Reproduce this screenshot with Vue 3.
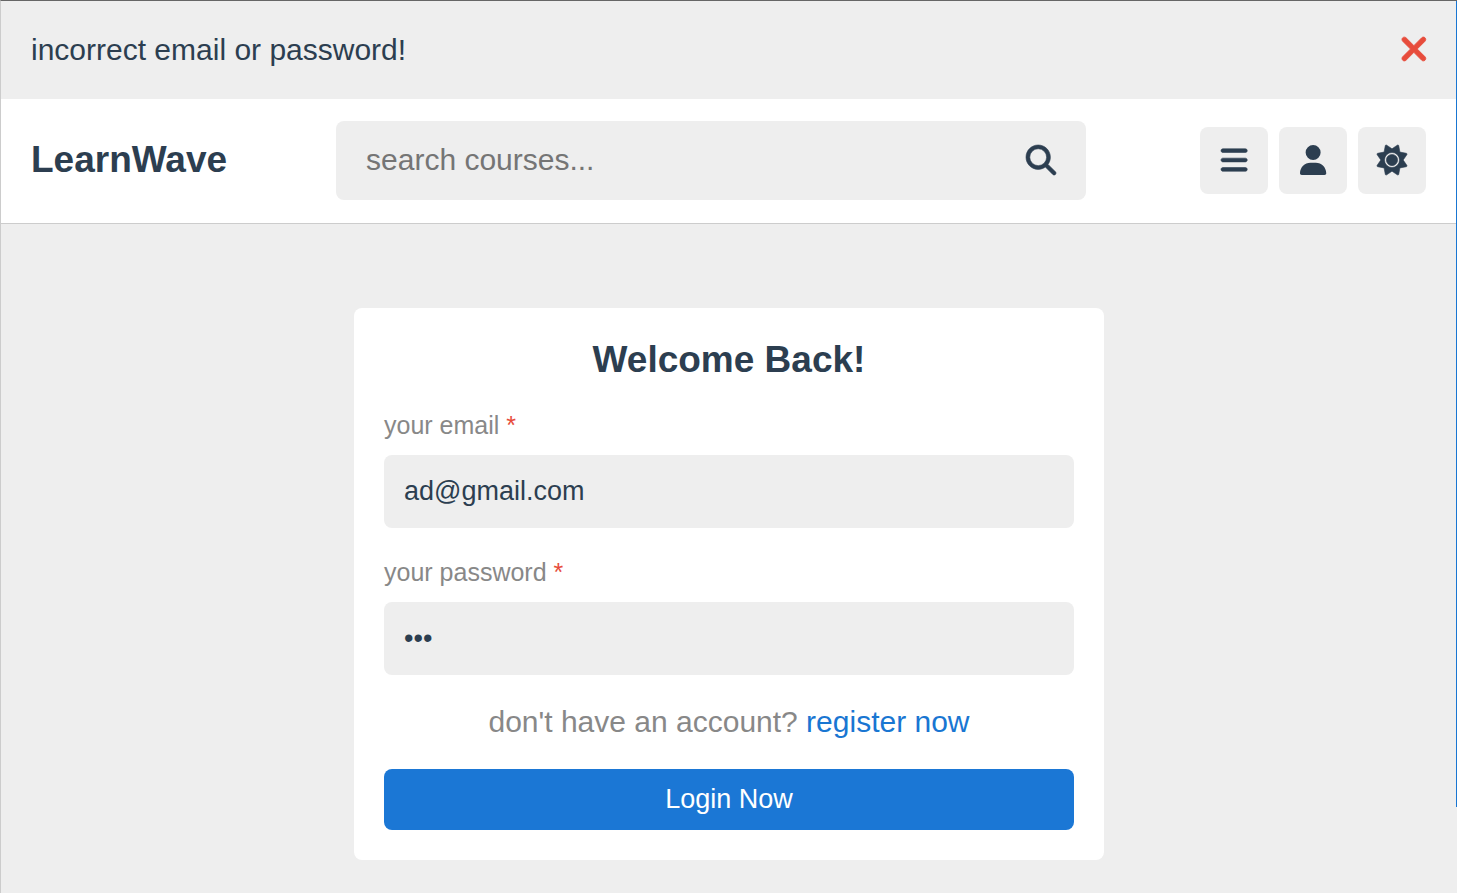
<script setup>
import { ref } from 'vue'

const showMessage = ref(true)
const search = ref('')
const email = ref('ad@gmail.com')
const password = ref('abc')
</script>

<template>
  <div class="page">
    <div v-if="showMessage" class="message" role="alert">
      <span>incorrect email or password!</span>
      <button type="button" class="close" aria-label="Dismiss" @click="showMessage = false">
        <svg viewBox="0 0 320 512" aria-hidden="true"><path d="M310.6 150.6c12.5-12.5 12.5-32.8 0-45.3s-32.8-12.5-45.3 0L160 210.7 54.6 105.4c-12.5-12.5-32.8-12.5-45.3 0s-12.5 32.8 0 45.3L114.7 256 9.4 361.4c-12.5 12.5-12.5 32.8 0 45.3s32.8 12.5 45.3 0L160 301.3 265.4 406.6c12.5 12.5 32.8 12.5 45.3 0s12.5-32.8 0-45.3L205.3 256 310.6 150.6z" /></svg>
      </button>
    </div>

    <header class="header">
      <a href="#" class="logo">LearnWave</a>
      <form class="search" role="search" @submit.prevent>
        <input v-model="search" type="text" placeholder="search courses..." aria-label="search courses" />
        <button type="submit" aria-label="Search">
          <svg class="bold" viewBox="0 0 512 512" aria-hidden="true"><path d="M416 208c0 45.9-14.9 88.3-40 122.7L502.6 457.4c12.5 12.5 12.5 32.8 0 45.3s-32.8 12.5-45.3 0L330.7 376c-34.4 25.2-76.8 40-122.7 40C93.1 416 0 322.9 0 208S93.1 0 208 0S416 93.1 416 208zM208 352a144 144 0 1 0 0-288 144 144 0 1 0 0 288z" /></svg>
        </button>
      </form>
      <nav class="icons">
        <button type="button" aria-label="Menu">
          <svg class="bold" viewBox="0 0 448 512" aria-hidden="true"><path d="M0 96C0 78.3 14.3 64 32 64H416c17.7 0 32 14.3 32 32s-14.3 32-32 32H32C14.3 128 0 113.7 0 96zM0 256c0-17.7 14.3-32 32-32H416c17.7 0 32 14.3 32 32s-14.3 32-32 32H32c-17.7 0-32-14.3-32-32zM448 416c0 17.7-14.3 32-32 32H32c-17.7 0-32-14.3-32-32s14.3-32 32-32H416c17.7 0 32 14.3 32 32z" /></svg>
        </button>
        <button type="button" aria-label="Profile">
          <svg viewBox="0 0 448 512" aria-hidden="true"><path d="M224 256A128 128 0 1 0 224 0a128 128 0 1 0 0 256zm-45.7 48C79.8 304 0 383.8 0 482.3C0 498.7 13.3 512 29.7 512H418.3c16.4 0 29.7-13.3 29.7-29.7C448 383.8 368.2 304 269.7 304H178.3z" /></svg>
        </button>
        <button type="button" aria-label="Toggle theme">
          <svg class="bold" viewBox="0 0 512 512" aria-hidden="true"><path d="M361.5 1.2c5 2.1 8.6 6.6 9.6 11.9L391 121l107.9 19.8c5.3 1 9.8 4.6 11.9 9.6s1.5 10.7-1.6 15.2L446.9 256l62.3 90.3c3.1 4.5 3.7 10.2 1.6 15.2s-6.6 8.6-11.9 9.6L391 391 371.1 498.9c-1 5.3-4.6 9.8-9.6 11.9s-10.7 1.5-15.2-1.6L256 446.9l-90.3 62.3c-4.5 3.1-10.2 3.7-15.2 1.6s-8.6-6.6-9.6-11.9L121 391 13.1 371.1c-5.3-1-9.8-4.6-11.9-9.6s-1.5-10.7 1.6-15.2L65.1 256 2.8 165.7c-3.1-4.5-3.7-10.2-1.6-15.2s6.6-8.6 11.9-9.6L121 121 140.9 13.1c1-5.3 4.6-9.8 9.6-11.9s10.7-1.5 15.2 1.6L256 65.1 346.3 2.8c4.5-3.1 10.2-3.7 15.2-1.6zM160 256a96 96 0 1 1 192 0 96 96 0 1 1 -192 0zm224 0a128 128 0 1 0 -256 0 128 128 0 1 0 256 0z" /></svg>
        </button>
      </nav>
    </header>

    <main class="content">
      <form class="card" @submit.prevent>
        <h1>Welcome Back!</h1>
        <label for="email">your email <span>*</span></label>
        <input id="email" v-model="email" class="box" type="email" />
        <label for="password">your password <span>*</span></label>
        <input id="password" v-model="password" class="box" type="password" />
        <p>don't have an account? <a href="#">register now</a></p>
        <button type="submit" class="login">Login Now</button>
      </form>
    </main>
    <div class="edge"></div>
  </div>
</template>

<style>
body {
  margin: 0;
  background: #eee;
}
</style>

<style scoped>
.page,
.page * {
  box-sizing: border-box;
}
.page {
  position: relative;
  min-height: 100vh;
  border-top: 1px solid #666;
  border-left: 1px solid #ccc;
  background: #eee;
  color: #2c3e50;
  font-family: "Liberation Sans", Arial, sans-serif;
  font-size: 30px;
}
button,
input {
  margin: 0;
  padding: 0;
  border: 0;
  outline: 0;
  background: none;
  color: inherit;
  font: inherit;
}
button {
  cursor: pointer;
}
a {
  text-decoration: none;
}
svg {
  display: block;
  height: 30px;
  overflow: visible;
  fill: currentColor;
}
.bold {
  stroke: currentColor;
  stroke-width: 10px;
}
.message {
  display: flex;
  align-items: center;
  justify-content: space-between;
  height: 98px;
  padding: 0 31px 0 30px;
}
.close {
  padding-bottom: 2px;
  color: #e74c3c;
}
.close svg {
  height: 38px;
  stroke: currentColor;
  stroke-width: 12px;
}
.header {
  display: flex;
  align-items: center;
  justify-content: space-between;
  height: 125px;
  padding: 0 31px 2px 30px;
  border-bottom: 1px solid #ccc;
  background: #fff;
}
.logo {
  color: inherit;
  font-size: 37px;
  font-weight: bold;
}
.search {
  display: flex;
  align-items: center;
  width: 750px;
  height: 79px;
  margin-right: 5px;
  padding: 0 30px;
  border-radius: 8px;
  background: #eee;
}
.search input {
  flex: 1;
  min-width: 0;
}
.search input::placeholder {
  color: #757575;
  opacity: 1;
}
.icons {
  display: flex;
  gap: 11px;
}
.icons button {
  display: grid;
  place-items: center;
  width: 68px;
  height: 67px;
  border-radius: 8px;
  background: #eee;
}
.content {
  padding: 84px 20px 32px;
}
.card {
  width: 100%;
  max-width: 750px;
  margin: 0 auto;
  padding: 30px;
  border-radius: 8px;
  background: #fff;
}
h1 {
  margin: 0 0 28px;
  font-size: 37px;
  line-height: 44px;
  text-align: center;
}
label {
  display: block;
  margin-bottom: 15px;
  color: #888;
  font-size: 25px;
  line-height: 30px;
}
label span {
  color: #e74c3c;
}
.box {
  display: block;
  width: 100%;
  height: 73px;
  margin-bottom: 29px;
  padding: 0 20px;
  border-radius: 8px;
  background: #eee;
  font-size: 27px;
}
.card p {
  margin: 0 0 30px;
  color: #888;
  line-height: 35px;
  text-align: center;
}
.card p a {
  color: #1976d2;
}
.login {
  display: block;
  width: 100%;
  height: 61px;
  border-radius: 8px;
  background: #1b77d5;
  color: #fff;
  font-size: 27px;
}
.edge {
  position: absolute;
  top: 0;
  right: 0;
  width: 1px;
  height: 806px;
  background: #1976d2;
}
</style>
